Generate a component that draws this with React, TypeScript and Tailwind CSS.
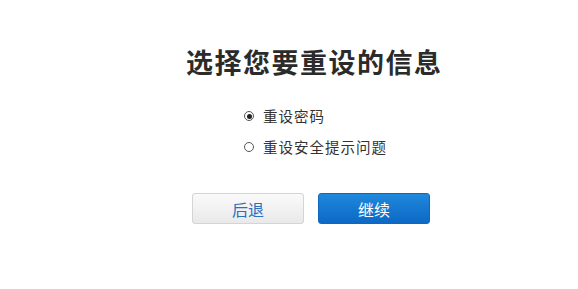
import { useState } from "react";

const font = { fontFamily: '"Noto Sans CJK SC", "Noto Sans", sans-serif' };

type Option = "password" | "question";

const options: { value: Option; label: string }[] = [
  { value: "password", label: "重设密码" },
  { value: "question", label: "重设安全提示问题" },
];

export default function App() {
  const [choice, setChoice] = useState<Option>("password");

  return (
    <div
      className="w-[578px] h-[289px] bg-white text-[#333] pl-[186px] pt-[43px]"
      style={font}
    >
      <h1 className="text-[27px] leading-[38px] font-bold tracking-[1.5px] whitespace-nowrap text-[#2b2b2b]">
        选择您要重设的信息
      </h1>

      <div className="ml-[58px] mt-[25px] flex flex-col gap-[11px]">
        {options.map((o) => (
          <label
            key={o.value}
            className="flex items-center gap-[9px] h-[20px] cursor-pointer text-[14.5px] text-[#333] tracking-[1px]"
            onClick={() => setChoice(o.value)}
          >
            <span className="w-[10px] h-[10px] rounded-full border border-[#555] flex items-center justify-center">
              {choice === o.value && (
                <span className="w-[5px] h-[5px] rounded-full bg-[#222]" />
              )}
            </span>
            {o.label}
          </label>
        ))}
      </div>

      <div className="ml-[6px] mt-[36px] flex gap-[14px]">
        <button className="w-[112px] h-[31px] rounded-[3px] border border-[#d4d4d4] bg-gradient-to-b from-[#fafafa] to-[#e9e9e9] text-[16px] text-[#2a6fc0]">
          后退
        </button>
        <button className="w-[112px] h-[31px] rounded-[3px] border border-[#1266bd] bg-gradient-to-b from-[#1f88dc] to-[#0d69c5] text-[16px] text-white">
          继续
        </button>
      </div>
    </div>
  );
}
